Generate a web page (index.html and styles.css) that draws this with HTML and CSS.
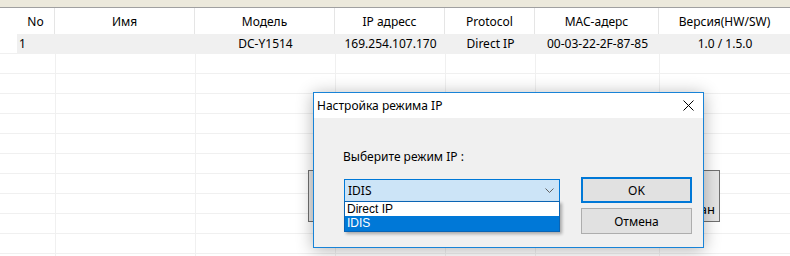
FILE: index.html
```html
<!DOCTYPE html>
<html lang="ru">
<head>
    <meta charset="UTF-8">
    <title>Настройка режима IP</title>
    <link rel="stylesheet" href="styles.css">
</head>
<body>
    <div class="topband"></div>

    <div class="list">
        <div class="row head">
            <div class="cell c0"></div>
            <div class="cell">No</div>
            <div class="cell">Имя</div>
            <div class="cell">Модель</div>
            <div class="cell">IP адресс</div>
            <div class="cell">Protocol</div>
            <div class="cell">MAC-адерс</div>
            <div class="cell">Версия(HW/SW)</div>
        </div>
        <div class="row sel">
            <div class="cell c0"></div>
            <div class="cell num">1</div>
            <div class="cell"></div>
            <div class="cell">DC-Y1514</div>
            <div class="cell">169.254.107.170</div>
            <div class="cell">Direct IP</div>
            <div class="cell">00-03-22-2F-87-85</div>
            <div class="cell">1.0 / 1.5.0</div>
        </div>
        <div class="row"><div class="cell c0"></div><div class="cell"></div><div class="cell"></div><div class="cell"></div><div class="cell"></div><div class="cell"></div><div class="cell"></div><div class="cell"></div></div>
        <div class="row"><div class="cell c0"></div><div class="cell"></div><div class="cell"></div><div class="cell"></div><div class="cell"></div><div class="cell"></div><div class="cell"></div><div class="cell"></div></div>
        <div class="row"><div class="cell c0"></div><div class="cell"></div><div class="cell"></div><div class="cell"></div><div class="cell"></div><div class="cell"></div><div class="cell"></div><div class="cell"></div></div>
        <div class="row"><div class="cell c0"></div><div class="cell"></div><div class="cell"></div><div class="cell"></div><div class="cell"></div><div class="cell"></div><div class="cell"></div><div class="cell"></div></div>
        <div class="row"><div class="cell c0"></div><div class="cell"></div><div class="cell"></div><div class="cell"></div><div class="cell"></div><div class="cell"></div><div class="cell"></div><div class="cell"></div></div>
        <div class="row"><div class="cell c0"></div><div class="cell"></div><div class="cell"></div><div class="cell"></div><div class="cell"></div><div class="cell"></div><div class="cell"></div><div class="cell"></div></div>
        <div class="row"><div class="cell c0"></div><div class="cell"></div><div class="cell"></div><div class="cell"></div><div class="cell"></div><div class="cell"></div><div class="cell"></div><div class="cell"></div></div>
        <div class="row"><div class="cell c0"></div><div class="cell"></div><div class="cell"></div><div class="cell"></div><div class="cell"></div><div class="cell"></div><div class="cell"></div><div class="cell"></div></div>
        <div class="row"><div class="cell c0"></div><div class="cell"></div><div class="cell"></div><div class="cell"></div><div class="cell"></div><div class="cell"></div><div class="cell"></div><div class="cell"></div></div>
        <div class="row"><div class="cell c0"></div><div class="cell"></div><div class="cell"></div><div class="cell"></div><div class="cell"></div><div class="cell"></div><div class="cell"></div><div class="cell"></div></div>
        <div class="row"><div class="cell c0"></div><div class="cell"></div><div class="cell"></div><div class="cell"></div><div class="cell"></div><div class="cell"></div><div class="cell"></div><div class="cell"></div></div>
    </div>

    <!-- кнопка главного окна под диалогом -->
    <div class="back-btn"><span>Скан</span></div>

    <div class="dialog">
        <div class="titlebar">
            <span>Настройка режима IP</span>
            <svg class="close" width="11" height="11" viewBox="0 0 11 11">
                <path d="M0.5 0.5 L10.5 10.5 M10.5 0.5 L0.5 10.5" stroke="#000" stroke-width="1" fill="none"/>
            </svg>
        </div>
        <div class="dlg-body">
            <div class="left-col">
                <div class="label">Выберите режим IP :</div>
                <div class="combo">
                    <span>IDIS</span>
                    <svg width="9" height="5" viewBox="0 0 9 5">
                        <path d="M0.5 0.5 L4.5 4.5 L8.5 0.5" stroke="#606060" stroke-width="1" fill="none"/>
                    </svg>
                    <div class="droplist">
                        <div class="item">Direct IP</div>
                        <div class="item active">IDIS</div>
                    </div>
                </div>
            </div>
            <div class="buttons">
                <button class="btn btn-ok">OK</button>
                <button class="btn btn-cancel">Отмена</button>
            </div>
        </div>
    </div>
</body>
</html>
```

FILE: styles.css
```css
body {
    margin: 0;
    width: 790px;
    height: 256px;
    overflow: hidden;
    position: relative;
    font-family: 'Noto Sans', 'Liberation Sans', sans-serif;
    font-size: 12px;
    color: #000;
    background-color: #fff;
}
.topband {
    height: 7px;
    background-color: #ece9dc;
    border-bottom: 1px solid #a0a0a0;
}
.list {
    height: 248px;
    overflow: hidden;
}
.row {
    display: grid;
    grid-template-columns: 17px 38px 140px 140px 110px 90px 124px 1fr;
    height: 20px;
    box-sizing: border-box;
    border-bottom: 1px solid #f0f0f0;
}
.cell {
    display: flex;
    align-items: center;
    justify-content: center;
    white-space: nowrap;
    overflow: hidden;
}
.row:not(.head) .cell:nth-child(n+3) { border-left: 1px solid #f0f0f0; }
.row.head {
    height: 26px;
    border-bottom: none;
}
.row.head .cell:nth-child(n+2):nth-child(-n+7) { border-right: 1px solid #e5e5e5; }
.row.sel .cell:nth-child(n+2) { background-color: #f0f0f0; }
.cell.num {
    justify-content: flex-start;
    padding-left: 2px;
}

.back-btn {
    position: absolute;
    left: 308px;
    top: 170px;
    width: 412px;
    height: 52px;
    box-sizing: border-box;
    border: 1px solid #707070;
    background-color: #e5e5e5;
    display: flex;
    align-items: flex-end;
    justify-content: flex-end;
    padding: 0 4px 3px 0;
    font-size: 13px;
}

.dialog {
    position: absolute;
    left: 313px;
    top: 92px;
    width: 391px;
    height: 156px;
    box-sizing: border-box;
    border: 1px solid #1883d7;
    background-color: #f0f0f0;
    box-shadow: 0 2px 16px rgba(0, 0, 0, 0.3);
}
.titlebar {
    height: 25px;
    background-color: #fff;
    display: flex;
    align-items: center;
    justify-content: space-between;
    padding: 0 9px 0 3px;
}
.close { display: block; }
.dlg-body {
    display: flex;
    align-items: flex-start;
    padding: 31px 0 0 30px;
}
.left-col { width: 216px; }
.label {
    height: 15px;
    line-height: 15px;
    margin: 0 0 15px -1px;
}
.combo {
    position: relative;
    height: 23px;
    box-sizing: border-box;
    border: 1px solid #0078d7;
    background-color: #cce4f7;
    display: flex;
    align-items: center;
    justify-content: space-between;
    padding: 0 5px 0 3px;
}
.combo svg { display: block; }
.droplist {
    position: absolute;
    left: -1px;
    top: 21px;
    width: 216px;
    box-sizing: border-box;
    border: 1px solid #0a64b4;
    background-color: #fff;
    box-shadow: 2px 2px 3px rgba(0, 0, 0, 0.3);
    font-family: 'Liberation Sans', Arial, sans-serif;
    font-size: 12px;
}
.item {
    height: 14px;
    line-height: 14px;
    padding-left: 2px;
}
.item.active {
    height: 15px;
    line-height: 15px;
    background-color: #0078d7;
    color: #fff;
}
.buttons {
    margin: 28px 0 0 21px;
    display: flex;
    flex-direction: column;
    gap: 5px;
}
.btn {
    width: 111px;
    height: 26px;
    box-sizing: border-box;
    background-color: #e1e1e1;
    font-family: inherit;
    font-size: 12px;
    color: #000;
    padding: 0;
    margin: 0;
}
.btn-ok { border: 2px solid #0078d7; }
.btn-cancel { border: 1px solid #adadad; }
```
